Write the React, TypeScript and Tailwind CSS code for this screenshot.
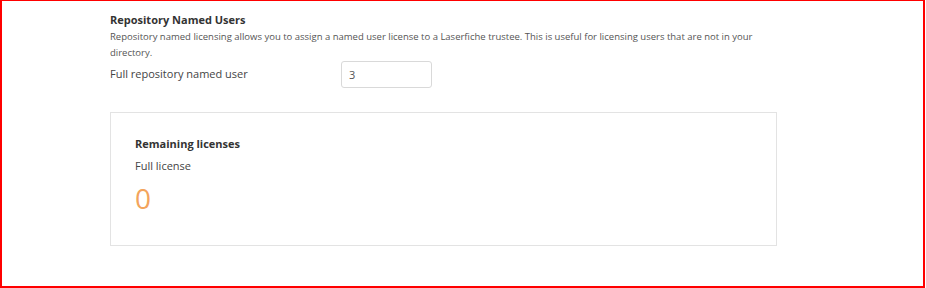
export default function App() {
  return (
    <div
      className="w-[925px] h-[288px] border-l-2 border-t border-r-2 border-b-2 border-[#ff0000] bg-white text-[#333]"
      style={{ fontFamily: '"Open Sans", sans-serif' }}
    >
      <div className="pl-[108px] pt-[10px] w-[775px]">
        <h2 className="text-[11px] font-bold leading-[18px] text-[#333]">Repository Named Users</h2>
        <p className="text-[9.5px] leading-[16px] text-[#555]">
          Repository named licensing allows you to assign a named user license to a Laserfiche trustee. This is useful for
          licensing users that are not in your directory.
        </p>
        <div className="flex items-center">
          <label className="w-[231px] text-[11px] text-[#444]">Full repository named user</label>
          <input
            defaultValue="3"
            className="w-[91px] h-[27px] border border-[#d9d9d9] rounded-[3px] px-[7px] text-[11px] text-[#555] outline-none"
          />
        </div>
        <div className="mt-[24px] border border-[#e3e3e3] h-[134px] px-[24px] pt-[23px]">
          <div className="text-[11px] font-bold leading-[16px] text-[#333]">Remaining licenses</div>
          <div className="mt-[6px] text-[11px] leading-[16px] text-[#444]">Full license</div>
          <div className="mt-[6px] text-[28px] leading-[36px] text-[#f3a45c]">0</div>
        </div>
      </div>
    </div>
  );
}
